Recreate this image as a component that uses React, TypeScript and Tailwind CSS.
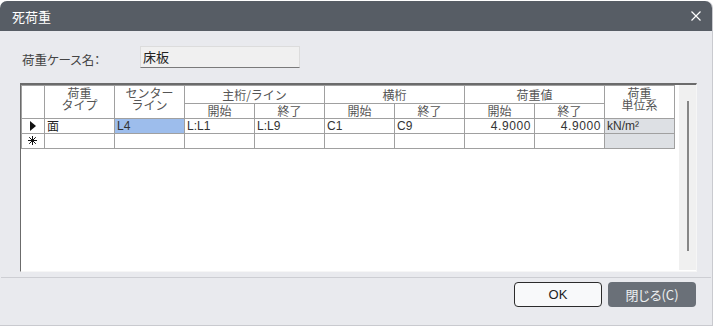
import React from 'react';

const jp = "font-['Noto_Sans_CJK_JP',sans-serif]";
const cell = 'border-r border-b border-[#a0a0a0] whitespace-nowrap';
const head = 'border-r border-b border-[#a0a0a0] bg-white text-center text-[#555] text-[12px] leading-[12px]';
const num = "font-['Liberation_Sans','Noto_Sans_CJK_JP',sans-serif] text-[12px] leading-[14px] text-[#333]";

const Arrow: React.FC = () => (
  <svg width="6" height="10" viewBox="0 0 6 10" className="block">
    <path d="M0 0L6 5L0 10Z" fill="#111" />
  </svg>
);

const Star: React.FC = () => (
  <svg width="9" height="9" viewBox="0 0 9 9" className="block">
    <path d="M4.5 0V9M0 4.5H9M1.2 1.2L7.8 7.8M7.8 1.2L1.2 7.8" stroke="#111" strokeWidth="1" />
  </svg>
);

const TwoLine: React.FC<{ a: string; b: string }> = ({ a, b }) => (
  <div className="flex flex-col items-center">
    <span className="block h-[12px] leading-[12px]">{a}</span>
    <span className="block h-[12px] leading-[12px]">{b}</span>
  </div>
);

const App: React.FC = () => {
  return (
    <div className={`w-[715px] h-[327px] bg-white ${jp}`}>
      <div className="mt-px w-[713px] h-[325px] bg-[#e9eaee] rounded-t-[7px] border-b border-r border-[#c9cacf] flex flex-col">
        {/* Title bar */}
        <div className="h-[30px] bg-[#575d65] rounded-t-[7px] flex items-center justify-between pl-[12px] pr-[11px]">
          <span className="text-white text-[13px] leading-none [font-feature-settings:'palt']">死荷重</span>
          <svg width="10" height="10" viewBox="0 0 10 10" className="block">
            <path d="M0.5 0.5L9.5 9.5M9.5 0.5L0.5 9.5" stroke="#fff" strokeWidth="1.2" />
          </svg>
        </div>

        <div className="px-[20px]">
          {/* Case name */}
          <div className="mt-[14px] flex items-center">
            <div className="w-[120px] pl-[2px] pt-[6px] text-[12.5px] text-[#444] [font-feature-settings:'palt']">荷重ケース名：</div>
            <div className="w-[160px] h-[22px] bg-[#f0f0f0] border border-[#dcdcdc] border-b-[#7a7a7a] pl-[2px] text-[13px] leading-[20px] text-[#222]">
              床板
            </div>
          </div>

          {/* Grid */}
          <div className="mt-[13px] w-[677px] h-[189px] bg-white border-t-2 border-l border-[#6b6b6b] border-r border-b border-r-[#f6f6f6] border-b-[#f6f6f6] flex">
            <div className="w-[654px] self-start border-l border-t border-[#a0a0a0] grid grid-cols-[23px_repeat(9,70px)] grid-rows-[18px_15px_15px_15px]">
              <div className={`${head} row-span-2`}></div>
              <div className={`${head} row-span-2 pt-[1px]`}><TwoLine a="荷重" b="タイプ" /></div>
              <div className={`${head} row-span-2 pt-[1px]`}><TwoLine a="センター" b="ライン" /></div>
              <div className={`${head} col-span-2 leading-[17px]`}>主桁/ライン</div>
              <div className={`${head} col-span-2 leading-[17px]`}>横桁</div>
              <div className={`${head} col-span-2 leading-[17px]`}>荷重値</div>
              <div className={`${head} row-span-2 pt-[1px]`}><TwoLine a="荷重" b="単位系" /></div>
              <div className={`${head} leading-[14px]`}>開始</div>
              <div className={`${head} leading-[14px]`}>終了</div>
              <div className={`${head} leading-[14px]`}>開始</div>
              <div className={`${head} leading-[14px]`}>終了</div>
              <div className={`${head} leading-[14px]`}>開始</div>
              <div className={`${head} leading-[14px]`}>終了</div>

              {/* Row 1 */}
              <div className={`${cell} flex items-center pl-[8px]`}><Arrow /></div>
              <div className={`${cell} pl-[2px] text-[12px] leading-[14px] text-[#222]`}>面</div>
              <div className={`${cell} bg-[#9dbdec] pl-[2px] ${num}`}>L4</div>
              <div className={`${cell} pl-[2px] ${num}`}>L:L1</div>
              <div className={`${cell} pl-[2px] ${num}`}>L:L9</div>
              <div className={`${cell} pl-[2px] ${num}`}>C1</div>
              <div className={`${cell} pl-[2px] ${num}`}>C9</div>
              <div className={`${cell} pr-[3px] text-right ${num} tracking-[0.6px]`}>4.9000</div>
              <div className={`${cell} pr-[3px] text-right ${num} tracking-[0.6px]`}>4.9000</div>
              <div className={`${cell} bg-[#dde0e4] pl-[2px] ${num}`}>kN/m²</div>

              {/* Row 2 (new row) */}
              <div className={`${cell} flex items-center pl-[6px]`}><Star /></div>
              <div className={cell}></div>
              <div className={cell}></div>
              <div className={cell}></div>
              <div className={cell}></div>
              <div className={cell}></div>
              <div className={cell}></div>
              <div className={cell}></div>
              <div className={cell}></div>
              <div className={`${cell} bg-[#dde0e4]`}></div>
            </div>

            {/* Scrollbar */}
            <div className="ml-[4px] mb-[1px] w-[17px] bg-[#f0f0f0] pt-[16px] flex justify-center">
              <div className="w-[2px] h-[150px] bg-[#868686]"></div>
            </div>
          </div>
        </div>

        {/* Separator */}
        <div className="mt-[5px] mx-px h-px bg-[#cdced3]"></div>

        {/* Buttons */}
        <div className="mt-[4px] flex justify-end gap-[6px] pr-[16px]">
          <button className="w-[88px] h-[25px] rounded-[4px] border border-[#2b2b2b] bg-[#f8f9fa] text-[13px] text-[#222] font-['Liberation_Sans','Noto_Sans_CJK_JP',sans-serif]">
            OK
          </button>
          <button className="w-[88px] h-[25px] rounded-[4px] bg-[#6a7078] text-[13px] text-[#eef0f2] [font-feature-settings:'palt']">
            閉じる(C)
          </button>
        </div>
      </div>
    </div>
  );
};

export default App;
